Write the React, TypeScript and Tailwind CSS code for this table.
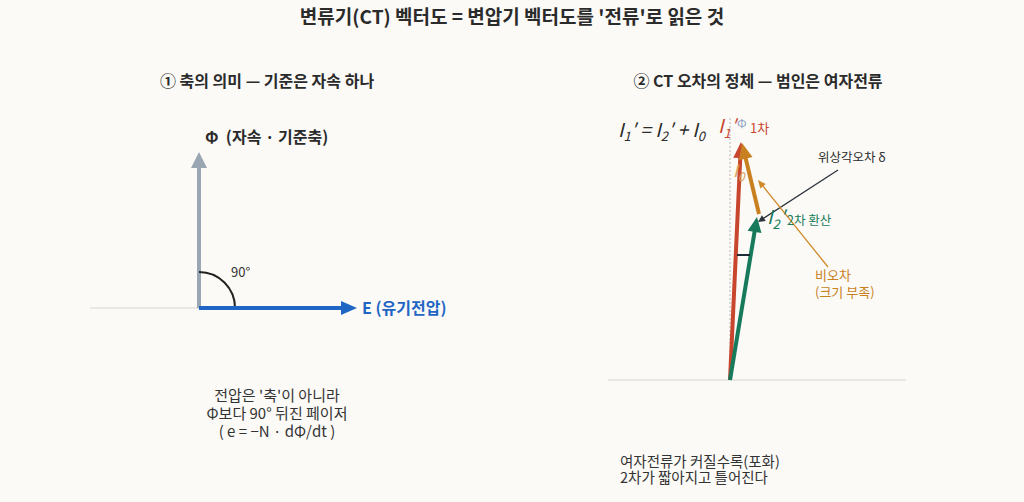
import React from 'react';

const Arrow = ({
  x1, y1, x2, y2, color, w = 4, head = 15, hw = 7,
}: {
  x1: number; y1: number; x2: number; y2: number; color: string; w?: number; head?: number; hw?: number;
}) => {
  const dx = x2 - x1;
  const dy = y2 - y1;
  const len = Math.hypot(dx, dy);
  const ux = dx / len;
  const uy = dy / len;
  const bx = x2 - ux * head;
  const by = y2 - uy * head;
  const px = -uy;
  const py = ux;
  return (
    <g>
      <line x1={x1} y1={y1} x2={bx + ux * 2} y2={by + uy * 2} stroke={color} strokeWidth={w} />
      <polygon
        points={`${x2},${y2} ${bx + px * hw},${by + py * hw} ${bx - px * hw},${by - py * hw}`}
        fill={color}
      />
    </g>
  );
};

const LeftDiagram = () => (
  <svg width={512} height={296} className="block">
    <line x1={90} y1={218} x2={355} y2={218} stroke="#d8d5cd" strokeWidth={1} />
    <Arrow x1={199} y1={218} x2={199} y2={62} color="#9ba6b3" w={4} head={16} hw={8} />
    <text x={205} y={53} fontSize={16} fontWeight={700} fill="#2b2b2b" style={{ whiteSpace: 'pre' }}>
      {'Φ  (자속 · 기준축)'}
    </text>
    <path d="M199 182 A36 36 0 0 1 235 218" fill="none" stroke="#222" strokeWidth={2} />
    <text x={231} y={187} fontSize={13} fill="#333">90°</text>
    <Arrow x1={199} y1={218} x2={357} y2={218} color="#1f66c4" w={4} head={16} hw={7} />
    <text x={362} y={224} fontSize={16} fontWeight={700} fill="#1f66c4">E (유기전압)</text>
  </svg>
);

const RightDiagram = () => (
  <svg width={512} height={363} className="block">
    <line x1={96} y1={290} x2={394} y2={290} stroke="#d8d5cd" strokeWidth={1} />
    <line x1={218} y1={28} x2={218} y2={290} stroke="#b5b5b5" strokeWidth={1} strokeDasharray="2 2" />

    <Arrow x1={218} y1={290} x2={229} y2={52} color="#c8462d" w={4} head={16} hw={7} />
    <Arrow x1={247} y1={124} x2={230} y2={53} color="#c98020" w={4} head={16} hw={7} />
    <Arrow x1={218} y1={290} x2={245} y2={127} color="#167a5b" w={4} head={15} hw={7} />

    <line x1={225} y1={165} x2={238} y2={165} stroke="#1f2a37" strokeWidth={2} />

    <Arrow x1={326} y1={80} x2={246} y2={132} color="#2d333b" w={1.3} head={7} hw={3.5} />
    <Arrow x1={316} y1={177} x2={246} y2={90} color="#d08a2a" w={1.3} head={8} hw={3.5} />

    <text x={106} y={47} fontSize={19} fontStyle="italic" fill="#2b2b2b">
      I<tspan fontSize={13} dy={4}>1</tspan><tspan dy={-4}>′ = I</tspan>
      <tspan fontSize={13} dy={4}>2</tspan><tspan dy={-4}>′ + I</tspan>
      <tspan fontSize={13} dy={4}>0</tspan>
    </text>

    <text x={206} y={43} fontSize={19} fontStyle="italic" fill="#c8462d">
      I<tspan fontSize={13} dy={5}>1</tspan><tspan dy={-5}>′</tspan>
    </text>
    <text x={225} y={38} fontSize={12} fill="#8fa3c4">Φ</text>
    <text x={238} y={43} fontSize={13} fill="#c8462d">1차</text>

    <text x={221} y={87} fontSize={17} fontStyle="italic" fill="#d9a058">
      I<tspan fontSize={12} dy={4}>0</tspan>
    </text>

    <text x={255} y={134} fontSize={19} fontStyle="italic" fill="#167a5b">
      I<tspan fontSize={13} dy={5}>2</tspan><tspan dy={-5}>′</tspan>
    </text>
    <text x={275} y={135} fontSize={12.5} fill="#167a5b">2차 환산</text>

    <text x={306} y={72} fontSize={12.5} fill="#2b2b2b">위상각오차 δ</text>

    <text x={303} y={190} fontSize={13} fill="#c98020">비오차</text>
    <text x={303} y={207} fontSize={13} fill="#c98020">(크기 부족)</text>
  </svg>
);

const App = () => {
  return (
    <div className="w-[1024px] h-[502px] overflow-hidden bg-[#fbfaf7] text-[#2b2b2b] font-['Noto_Sans_CJK_KR','Noto_Sans',sans-serif]">
      <div className="pt-[4px] h-[28px] text-center text-[19px] leading-[24px] font-bold">
        변류기(CT) 벡터도 = 변압기 벡터도를 '전류'로 읽은 것
      </div>

      <div className="grid grid-cols-2">
        <div className="flex flex-col">
          <div className="mt-[42px] h-[20px] pl-[22px] text-center text-[16px] leading-[20px] font-bold">
            ① 축의 의미 — 기준은 자속 하나
          </div>
          <LeftDiagram />
          <div className="pl-[42px] text-center text-[15px] leading-[18px] text-[#333]">
            <p>전압은 '축'이 아니라</p>
            <p>Φ보다 90° 뒤진 페이저</p>
            <p>( e = −N · dΦ/dt )</p>
          </div>
        </div>

        <div className="flex flex-col">
          <div className="mt-[42px] h-[20px] pr-[20px] text-center text-[16px] leading-[20px] font-bold">
            ② CT 오차의 정체 — 범인은 여자전류
          </div>
          <RightDiagram />
          <div className="pl-[108px] text-[14.5px] leading-[16px] text-[#333]">
            <p>여자전류가 커질수록(포화)</p>
            <p>2차가 짧아지고 틀어진다</p>
          </div>
        </div>
      </div>
    </div>
  );
};

export default App;
